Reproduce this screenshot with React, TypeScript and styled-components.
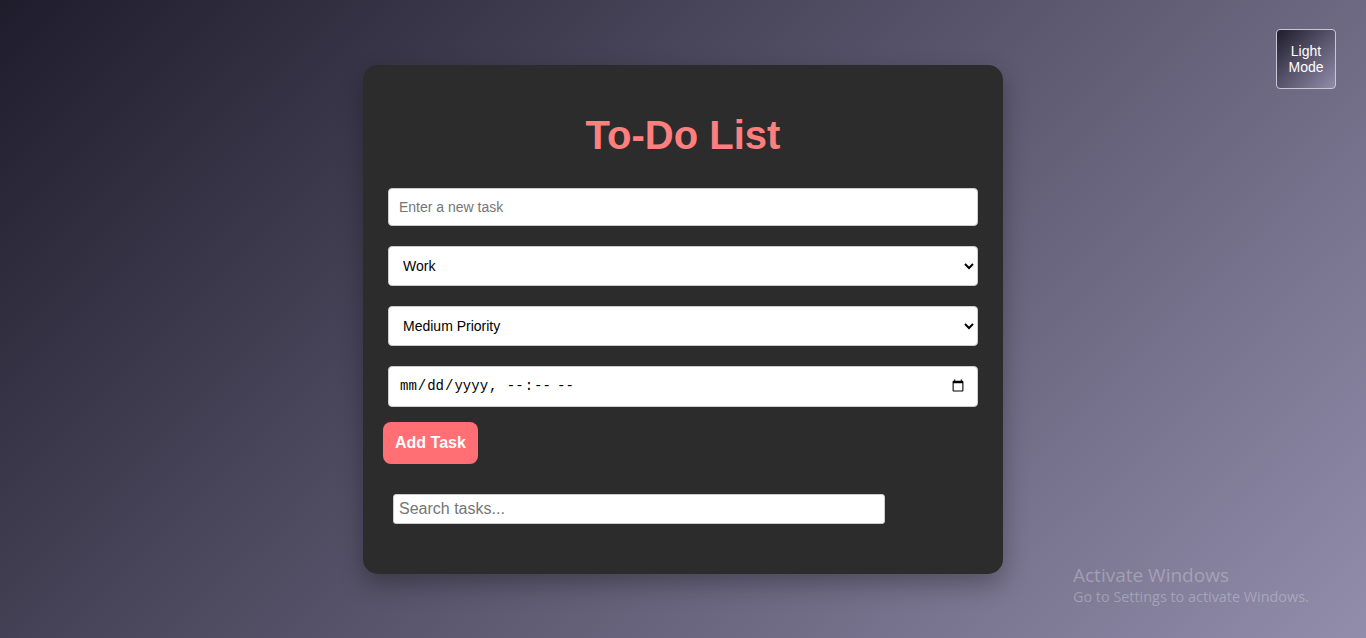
import React from "react";
import styled, { createGlobalStyle } from "styled-components";

const GlobalStyle = createGlobalStyle`
  html, body {
    margin: 0;
    padding: 0;
  }
  body {
    font-family: "Liberation Sans", Arial, sans-serif;
    background: linear-gradient(135deg, #1f1c2c, #928dab);
    min-height: 100vh;
    overflow: hidden;
  }
`;

const Page = styled.div`
  min-height: 100vh;
  height: 638px;
  display: flex;
  align-items: center;
  justify-content: center;
  position: relative;
`;

const ThemeToggle = styled.button`
  position: absolute;
  top: 29px;
  right: 30px;
  width: 60px;
  height: 60px;
  padding: 0 6px;
  border: 1px solid #c9c7d3;
  border-radius: 4px;
  background: linear-gradient(135deg, #1f1c2c, #928dab);
  color: #ffffff;
  font-family: "Liberation Sans", Arial, sans-serif;
  font-size: 14px;
  line-height: 16px;
  cursor: pointer;
`;

const Card = styled.div`
  width: 640px;
  box-sizing: border-box;
  padding: 20px 20px 50px;
  background: #2c2c2c;
  border-radius: 15px;
  box-shadow: 0 10px 25px rgba(0, 0, 0, 0.3);
  display: flex;
  flex-direction: column;
`;

const Title = styled.h1`
  margin: 27px 0 30px;
  font-size: 40px;
  line-height: 46px;
  font-weight: 700;
  text-align: center;
  color: #ff7f7f;
`;

const Form = styled.div`
  display: flex;
  flex-direction: column;
  align-items: flex-start;
`;

const fieldBase = `
  box-sizing: border-box;
  width: 590px;
  margin: 0 5px;
  background: #ffffff;
  border: 1px solid #cccccc;
  border-radius: 4px;
  color: #000000;
  outline: none;
`;

const TextInput = styled.input`
  ${fieldBase}
  height: 38px;
  padding: 10px;
  font-family: "Liberation Sans", Arial, sans-serif;
  font-size: 14px;
  margin-bottom: 20px;
  &::placeholder {
    color: #757575;
  }
`;

const Select = styled.select`
  ${fieldBase}
  height: 40px;
  padding: 0 10px;
  font-family: "Liberation Sans", Arial, sans-serif;
  font-size: 14px;
  margin-bottom: 20px;
`;

const DateInput = styled.input`
  ${fieldBase}
  height: 41px;
  padding: 10px;
  font-family: "Liberation Mono", "DejaVu Sans Mono", monospace;
  font-size: 14px;
  margin-bottom: 15px;
`;

const AddButton = styled.button`
  height: 42px;
  padding: 0 12px;
  border: none;
  border-radius: 8px;
  background: #ff6f74;
  color: #ffffff;
  font-family: "Liberation Sans", Arial, sans-serif;
  font-size: 16px;
  font-weight: 700;
  cursor: pointer;
`;

const SearchInput = styled.input`
  box-sizing: border-box;
  width: 492px;
  height: 30px;
  margin: 30px 0 0 10px;
  padding: 3px 5px;
  border: 1px solid #cccccc;
  border-radius: 3px;
  background: #ffffff;
  font-family: "Liberation Sans", Arial, sans-serif;
  font-size: 16px;
  outline: none;
  &::placeholder {
    color: #757575;
  }
`;

const Watermark = styled.div`
  position: absolute;
  left: 1073px;
  top: 563px;
  color: rgba(255, 255, 255, 0.28);
  font-family: "Open Sans", "Noto Sans", sans-serif;
  pointer-events: none;
`;

const WatermarkTitle = styled.div`
  font-size: 19px;
  line-height: 24px;
`;

const WatermarkSub = styled.div`
  font-size: 14.4px;
  line-height: 20px;
`;

export default function App() {
  return (
    <>
      <GlobalStyle />
      <Page>
        <ThemeToggle>Light Mode</ThemeToggle>
        <Card>
          <Title>To-Do List</Title>
          <Form>
            <TextInput type="text" placeholder="Enter a new task" />
            <Select defaultValue="work">
              <option value="work">Work</option>
              <option value="personal">Personal</option>
              <option value="shopping">Shopping</option>
            </Select>
            <Select defaultValue="medium">
              <option value="high">High Priority</option>
              <option value="medium">Medium Priority</option>
              <option value="low">Low Priority</option>
            </Select>
            <DateInput type="datetime-local" />
            <AddButton>Add Task</AddButton>
            <SearchInput type="text" placeholder="Search tasks..." />
          </Form>
        </Card>
        <Watermark>
          <WatermarkTitle>Activate Windows</WatermarkTitle>
          <WatermarkSub>Go to Settings to activate Windows.</WatermarkSub>
        </Watermark>
      </Page>
    </>
  );
}
